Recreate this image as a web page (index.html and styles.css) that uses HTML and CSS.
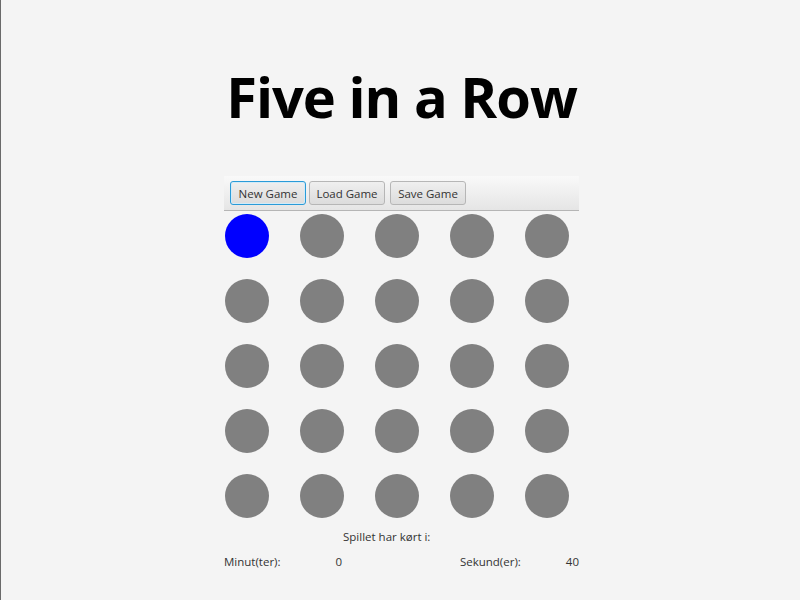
FILE: index.html
```html
<!DOCTYPE html>
<html>
<head>
<meta charset="utf-8">
<link rel="stylesheet" href="styles.css">
</head>
<body>
<div class="window">
  <div class="panel">
    <h1 class="title">Five in a Row</h1>
    <div class="toolbar">
      <button class="btn focused">New Game</button>
      <button class="btn">Load Game</button>
      <button class="btn">Save Game</button>
    </div>
    <div class="board">
      <span class="cell blue"></span><span class="cell"></span><span class="cell"></span><span class="cell"></span><span class="cell"></span>
      <span class="cell"></span><span class="cell"></span><span class="cell"></span><span class="cell"></span><span class="cell"></span>
      <span class="cell"></span><span class="cell"></span><span class="cell"></span><span class="cell"></span><span class="cell"></span>
      <span class="cell"></span><span class="cell"></span><span class="cell"></span><span class="cell"></span><span class="cell"></span>
      <span class="cell"></span><span class="cell"></span><span class="cell"></span><span class="cell"></span><span class="cell"></span>
    </div>
    <div class="elapsed">Spillet har kørt i:</div>
    <div class="timer">
      <span class="lbl">Minut(ter):</span>
      <span class="val min">0</span>
      <span class="lbl sec-lbl">Sekund(er):</span>
      <span class="val sec">40</span>
    </div>
  </div>
</div>
</body>
</html>
```
FILE: styles.css
```css
html, body {
  margin: 0;
  padding: 0;
}
body {
  background: #f4f4f4;
  font-family: "Open Sans", "Liberation Sans", sans-serif;
  color: #333;
}
.window {
  width: 799px;
  height: 600px;
  border-left: 1px solid #6a6a6a;
  overflow: hidden;
}
.panel {
  width: 355px;
  margin-left: 223px;
  display: flex;
  flex-direction: column;
}
.title {
  margin: 54px 0 0 0;
  height: 122px;
  font-size: 56px;
  line-height: 84px;
  font-weight: 700;
  letter-spacing: -1px;
  color: #000;
  text-align: center;
  white-space: nowrap;
}
.toolbar {
  height: 35px;
  box-sizing: border-box;
  border-bottom: 1px solid #b5b5b5;
  background: linear-gradient(#f9f9f9, #e5e5e5);
  display: flex;
  align-items: flex-start;
  padding: 5px 0 0 6px;
}
.btn {
  width: 76px;
  height: 24px;
  box-sizing: border-box;
  padding: 0;
  text-align: center;
  font-family: inherit;
  font-size: 11.5px;
  color: #333;
  border: 1px solid #b6b6b6;
  border-radius: 3px;
  background: linear-gradient(#efefef, #dcdcdc);
}
.btn + .btn { margin-left: 3px; }
.btn + .btn + .btn { margin-left: 5px; }
.btn.focused {
  border-color: #2a9bd8;
  box-shadow: inset 0 0 0 1px #d2ebf8;
}
.board {
  display: grid;
  grid-template-columns: repeat(5, 44px);
  grid-auto-rows: 44px;
  column-gap: 31px;
  row-gap: 21px;
  padding: 3px 0 0 1px;
}
.cell {
  width: 44px;
  height: 44px;
  border-radius: 50%;
  background: #808080;
}
.cell.blue { background: #0000ff; }
.elapsed {
  margin-top: 11px;
  padding-left: 119px;
  font-size: 11.5px;
  line-height: 16px;
  color: #333;
}
.timer {
  margin-top: 9px;
  display: flex;
  font-size: 11.5px;
  line-height: 16px;
  color: #333;
}
.min { margin-left: 55px; }
.sec-lbl { margin-left: auto; }
.sec { margin-left: 45px; }
```
